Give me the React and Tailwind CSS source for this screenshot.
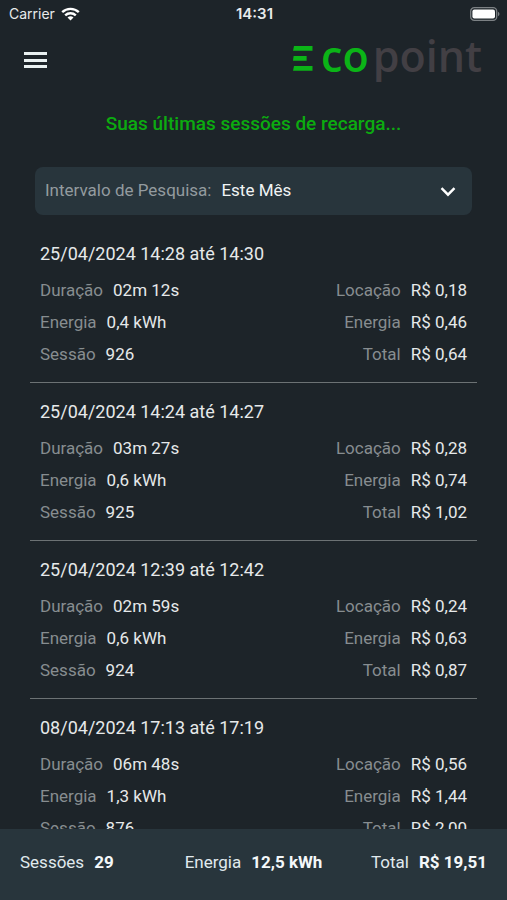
import { useState } from 'react'

const sessions = [
  {
    id: '926',
    period: '25/04/2024 14:28 até 14:30',
    duration: '02m 12s',
    energy: '0,4 kWh',
    rental: 'R$ 0,18',
    energyCost: 'R$ 0,46',
    total: 'R$ 0,64',
  },
  {
    id: '925',
    period: '25/04/2024 14:24 até 14:27',
    duration: '03m 27s',
    energy: '0,6 kWh',
    rental: 'R$ 0,28',
    energyCost: 'R$ 0,74',
    total: 'R$ 1,02',
  },
  {
    id: '924',
    period: '25/04/2024 12:39 até 12:42',
    duration: '02m 59s',
    energy: '0,6 kWh',
    rental: 'R$ 0,24',
    energyCost: 'R$ 0,63',
    total: 'R$ 0,87',
  },
  {
    id: '876',
    period: '08/04/2024 17:13 até 17:19',
    duration: '06m 48s',
    energy: '1,3 kWh',
    rental: 'R$ 0,56',
    energyCost: 'R$ 1,44',
    total: 'R$ 2,00',
  },
]

function StatusBar() {
  return (
    <div className="grid h-7 grid-cols-3 items-center pl-[9px] pr-[7px] font-['Inter','Liberation_Sans',sans-serif] text-sm text-[#e8eaeb]">
      <div className="flex items-center gap-[6px]">
        <span>Carrier</span>
        <svg width="19" height="14" viewBox="0 0 19 14" fill="none" stroke="#fff" strokeWidth="2.4">
          <path d="M1.2 5.2a12 12 0 0 1 16.6 0" />
          <path d="M4.2 8.4a7.6 7.6 0 0 1 10.6 0" />
          <path d="M9.5 13.6 6.5 10.6a4.3 4.3 0 0 1 6 0Z" fill="#fff" stroke="none" />
        </svg>
      </div>
      <span className="text-center text-[15px] font-semibold">14:31</span>
      <svg className="justify-self-end" width="30" height="14" viewBox="0 0 30 14">
        <rect x="0.7" y="0.7" width="26" height="12.6" rx="3.6" fill="none" stroke="#7c8184" strokeWidth="1.3" />
        <rect x="2.4" y="2.4" width="22.6" height="9.2" rx="2" fill="#fff" />
        <path d="M28 4.8c2 .8 2 3.6 0 4.4Z" fill="#7c8184" />
      </svg>
    </div>
  )
}

function Logo() {
  return (
    <div className="mt-1 flex h-12 items-center font-['Open_Sans','Liberation_Sans',sans-serif] text-[43px] leading-[48px] font-semibold">
      <svg className="mt-1 mr-2" width="20" height="25" viewBox="0 0 20 25" fill="#0bb417">
        <path d="M1 0h18.500v4.800H0Z" />
        <path d="M.6 10h13v4.800H0Z" />
        <path d="M1 20h18.500v4.800H0Z" />
      </svg>
      <span className="mr-1 text-[#0bb417]">co</span>
      <span className="text-[#423f44]">point</span>
    </div>
  )
}

function Field({ label, value, right }) {
  return (
    <div className={`flex h-8 items-center gap-[10px] ${right ? 'justify-end' : ''}`}>
      <dt className="text-[#878d90]">{label}</dt>
      <dd className="text-[#e6e9ea]">{value}</dd>
    </div>
  )
}

function Session({ session }) {
  return (
    <li className="border-b border-[#6c7274] px-[10px] pt-4 pb-[11px]">
      <h2 className="text-lg leading-[26px] text-[#e6e9ea]">{session.period}</h2>
      <div className="mt-2 flex justify-between">
        <dl>
          <Field label="Duração" value={session.duration} />
          <Field label="Energia" value={session.energy} />
          <Field label="Sessão" value={session.id} />
        </dl>
        <dl>
          <Field label="Locação" value={session.rental} right />
          <Field label="Energia" value={session.energyCost} right />
          <Field label="Total" value={session.total} right />
        </dl>
      </div>
    </li>
  )
}

export default function App() {
  const [range, setRange] = useState('month')

  return (
    <div className="flex h-screen flex-col bg-[#1d2429] font-['Roboto','Liberation_Sans',sans-serif] text-[17px]">
      <StatusBar />

      <header className="flex items-start justify-between pl-6 pr-[25px]">
        <button type="button" aria-label="Menu" className="mt-6 flex h-4 w-[23px] flex-col justify-between">
          <span className="h-[3px] w-full bg-[#e9f0f0]" />
          <span className="h-[3px] w-full bg-[#e9f0f0]" />
          <span className="h-[3px] w-full bg-[#e9f0f0]" />
        </button>
        <Logo />
      </header>

      <h1 className="mt-[30px] text-center text-[19px] leading-7 font-medium text-[#0cab10]">
        Suas últimas sessões de recarga...
      </h1>

      <div className="relative mx-[35px] mt-[29px] flex h-12 shrink-0 items-center rounded-lg bg-[#28353c]">
        <label htmlFor="range" className="pl-[10px] text-[#939b9f]">
          Intervalo de Pesquisa:
        </label>
        <select
          id="range"
          value={range}
          onChange={(e) => setRange(e.target.value)}
          className="h-full flex-1 appearance-none bg-transparent pl-[10px] text-[#f0f3f4] outline-none"
        >
          <option value="month">Este Mês</option>
          <option value="last">Mês Passado</option>
        </select>
        <svg
          className="pointer-events-none absolute top-5 right-4"
          width="16"
          height="10"
          viewBox="0 0 16 10"
          fill="none"
          stroke="#fff"
          strokeWidth="2.4"
        >
          <path d="m1.500 1.200 6.500 6.500 6.500-6.500" />
        </svg>
      </div>

      <main className="mt-[10px] min-h-0 flex-1 overflow-y-auto px-[30px] [scrollbar-width:none]">
        <ul>
          {sessions.map((session) => (
            <Session key={session.id} session={session} />
          ))}
        </ul>
      </main>

      <footer className="flex h-[71px] shrink-0 items-start bg-[#28353c] px-5 pt-5 leading-[26px] text-[#e0eaee]">
        <p className="flex flex-1 gap-[10px]">
          Sessões <strong className="text-[#f4f8fa]">29</strong>
        </p>
        <p className="flex gap-[10px]">
          Energia <strong className="text-[#f4f8fa]">12,5 kWh</strong>
        </p>
        <p className="flex flex-1 justify-end gap-[10px]">
          Total <strong className="text-[#f4f8fa]">R$ 19,51</strong>
        </p>
      </footer>
    </div>
  )
}
